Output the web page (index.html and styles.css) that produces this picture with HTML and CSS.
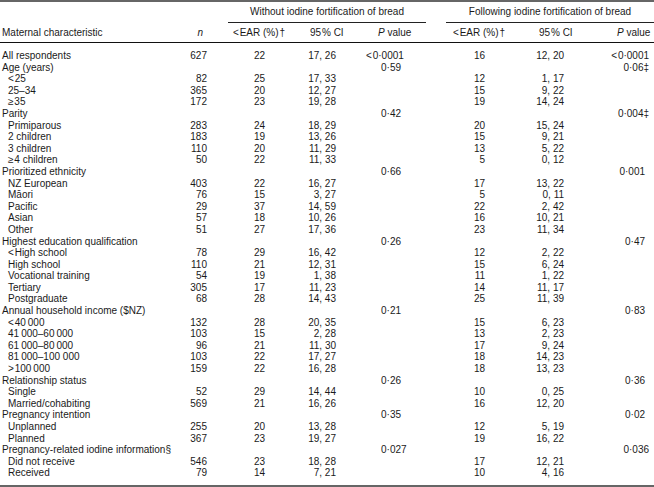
FILE: index.html
```html
<!DOCTYPE html>
<html lang="en">
<head>
    <meta charset="UTF-8">
    <meta name="viewport" content="width=device-width, initial-scale=1.0">
    <title>Iodine intake by maternal characteristic</title>
    <link rel="stylesheet" href="styles.css">
</head>
<body>
    <table class="iodine-table">
        <colgroup>
            <col class="c-label">
            <col class="c-n">
            <col class="c-ear1">
            <col class="c-ci1">
            <col class="c-p1">
            <col class="c-ear2">
            <col class="c-ci2">
            <col class="c-p2">
        </colgroup>
        <thead>
            <tr class="group-row">
                <th></th>
                <th></th>
                <th colspan="3" class="group group-1"><div>Without iodine fortification of bread</div></th>
                <th colspan="3" class="group group-2"><div>Following iodine fortification of bread</div></th>
            </tr>
            <tr class="col-row">
                <th class="label">Maternal characteristic</th>
                <th class="n"><i>n</i></th>
                <th class="ear1">&lt;&#8202;EAR (%)&#8202;†</th>
                <th class="ci1">95&#8202;% CI</th>
                <th class="p1"><i>P</i> value</th>
                <th class="ear2">&lt;&#8202;EAR (%)&#8202;†</th>
                <th class="ci2">95&#8202;% CI</th>
                <th class="p2"><i>P</i> value</th>
            </tr>
        </thead>
        <tbody>
            <!-- All respondents -->
            <tr class="first">
                <td class="label">All respondents</td>
                <td class="n">627</td><td class="ear1">22</td><td class="ci1">17, 26</td><td class="p1 lt">&lt;&#8202;0·0001</td>
                <td class="ear2">16</td><td class="ci2">12, 20</td><td class="p2 wide">&lt;&#8202;0·0001</td>
            </tr>

            <!-- Age -->
            <tr>
                <td class="label">Age (years)</td>
                <td class="n"></td><td class="ear1"></td><td class="ci1"></td><td class="p1">0·59</td>
                <td class="ear2"></td><td class="ci2"></td><td class="p2 wide">0·06‡</td>
            </tr>
            <tr>
                <td class="label sub">&lt;&#8202;25</td>
                <td class="n">82</td><td class="ear1">25</td><td class="ci1">17, 33</td><td class="p1"></td>
                <td class="ear2">12</td><td class="ci2">1, 17</td><td class="p2"></td>
            </tr>
            <tr>
                <td class="label sub">25–34</td>
                <td class="n">365</td><td class="ear1">20</td><td class="ci1">12, 27</td><td class="p1"></td>
                <td class="ear2">15</td><td class="ci2">9, 22</td><td class="p2"></td>
            </tr>
            <tr>
                <td class="label sub">≥&#8202;35</td>
                <td class="n">172</td><td class="ear1">23</td><td class="ci1">19, 28</td><td class="p1"></td>
                <td class="ear2">19</td><td class="ci2">14, 24</td><td class="p2"></td>
            </tr>

            <!-- Parity -->
            <tr>
                <td class="label">Parity</td>
                <td class="n"></td><td class="ear1"></td><td class="ci1"></td><td class="p1">0·42</td>
                <td class="ear2"></td><td class="ci2"></td><td class="p2 wide">0·004‡</td>
            </tr>
            <tr>
                <td class="label sub">Primiparous</td>
                <td class="n">283</td><td class="ear1">24</td><td class="ci1">18, 29</td><td class="p1"></td>
                <td class="ear2">20</td><td class="ci2">15, 24</td><td class="p2"></td>
            </tr>
            <tr>
                <td class="label sub">2 children</td>
                <td class="n">183</td><td class="ear1">19</td><td class="ci1">13, 26</td><td class="p1"></td>
                <td class="ear2">15</td><td class="ci2">9, 21</td><td class="p2"></td>
            </tr>
            <tr>
                <td class="label sub">3 children</td>
                <td class="n">110</td><td class="ear1">20</td><td class="ci1">11, 29</td><td class="p1"></td>
                <td class="ear2">13</td><td class="ci2">5, 22</td><td class="p2"></td>
            </tr>
            <tr>
                <td class="label sub">≥&#8202;4 children</td>
                <td class="n">50</td><td class="ear1">22</td><td class="ci1">11, 33</td><td class="p1"></td>
                <td class="ear2">5</td><td class="ci2">0, 12</td><td class="p2"></td>
            </tr>

            <!-- Ethnicity -->
            <tr>
                <td class="label">Prioritized ethnicity</td>
                <td class="n"></td><td class="ear1"></td><td class="ci1"></td><td class="p1">0·66</td>
                <td class="ear2"></td><td class="ci2"></td><td class="p2">0·001</td>
            </tr>
            <tr>
                <td class="label sub">NZ European</td>
                <td class="n">403</td><td class="ear1">22</td><td class="ci1">16, 27</td><td class="p1"></td>
                <td class="ear2">17</td><td class="ci2">13, 22</td><td class="p2"></td>
            </tr>
            <tr>
                <td class="label sub">Māori</td>
                <td class="n">76</td><td class="ear1">15</td><td class="ci1">3, 27</td><td class="p1"></td>
                <td class="ear2">5</td><td class="ci2">0, 11</td><td class="p2"></td>
            </tr>
            <tr>
                <td class="label sub">Pacific</td>
                <td class="n">29</td><td class="ear1">37</td><td class="ci1">14, 59</td><td class="p1"></td>
                <td class="ear2">22</td><td class="ci2">2, 42</td><td class="p2"></td>
            </tr>
            <tr>
                <td class="label sub">Asian</td>
                <td class="n">57</td><td class="ear1">18</td><td class="ci1">10, 26</td><td class="p1"></td>
                <td class="ear2">16</td><td class="ci2">10, 21</td><td class="p2"></td>
            </tr>
            <tr>
                <td class="label sub">Other</td>
                <td class="n">51</td><td class="ear1">27</td><td class="ci1">17, 36</td><td class="p1"></td>
                <td class="ear2">23</td><td class="ci2">11, 34</td><td class="p2"></td>
            </tr>

            <!-- Education -->
            <tr>
                <td class="label">Highest education qualification</td>
                <td class="n"></td><td class="ear1"></td><td class="ci1"></td><td class="p1">0·26</td>
                <td class="ear2"></td><td class="ci2"></td><td class="p2">0·47</td>
            </tr>
            <tr>
                <td class="label sub">&lt;&#8202;High school</td>
                <td class="n">78</td><td class="ear1">29</td><td class="ci1">16, 42</td><td class="p1"></td>
                <td class="ear2">12</td><td class="ci2">2, 22</td><td class="p2"></td>
            </tr>
            <tr>
                <td class="label sub">High school</td>
                <td class="n">110</td><td class="ear1">21</td><td class="ci1">12, 31</td><td class="p1"></td>
                <td class="ear2">15</td><td class="ci2">6, 24</td><td class="p2"></td>
            </tr>
            <tr>
                <td class="label sub">Vocational training</td>
                <td class="n">54</td><td class="ear1">19</td><td class="ci1">1, 38</td><td class="p1"></td>
                <td class="ear2">11</td><td class="ci2">1, 22</td><td class="p2"></td>
            </tr>
            <tr>
                <td class="label sub">Tertiary</td>
                <td class="n">305</td><td class="ear1">17</td><td class="ci1">11, 23</td><td class="p1"></td>
                <td class="ear2">14</td><td class="ci2">11, 17</td><td class="p2"></td>
            </tr>
            <tr>
                <td class="label sub">Postgraduate</td>
                <td class="n">68</td><td class="ear1">28</td><td class="ci1">14, 43</td><td class="p1"></td>
                <td class="ear2">25</td><td class="ci2">11, 39</td><td class="p2"></td>
            </tr>

            <!-- Income -->
            <tr>
                <td class="label">Annual household income ($NZ)</td>
                <td class="n"></td><td class="ear1"></td><td class="ci1"></td><td class="p1">0·21</td>
                <td class="ear2"></td><td class="ci2"></td><td class="p2">0·83</td>
            </tr>
            <tr>
                <td class="label sub">&lt;&#8202;40&#8201;000</td>
                <td class="n">132</td><td class="ear1">28</td><td class="ci1">20, 35</td><td class="p1"></td>
                <td class="ear2">15</td><td class="ci2">6, 23</td><td class="p2"></td>
            </tr>
            <tr>
                <td class="label sub">41&#8201;000–60&#8201;000</td>
                <td class="n">103</td><td class="ear1">15</td><td class="ci1">2, 28</td><td class="p1"></td>
                <td class="ear2">13</td><td class="ci2">2, 23</td><td class="p2"></td>
            </tr>
            <tr>
                <td class="label sub">61&#8201;000–80&#8201;000</td>
                <td class="n">96</td><td class="ear1">21</td><td class="ci1">11, 30</td><td class="p1"></td>
                <td class="ear2">17</td><td class="ci2">9, 24</td><td class="p2"></td>
            </tr>
            <tr>
                <td class="label sub">81&#8201;000–100 000</td>
                <td class="n">103</td><td class="ear1">22</td><td class="ci1">17, 27</td><td class="p1"></td>
                <td class="ear2">18</td><td class="ci2">14, 23</td><td class="p2"></td>
            </tr>
            <tr>
                <td class="label sub">&gt;&#8202;100&#8201;000</td>
                <td class="n">159</td><td class="ear1">22</td><td class="ci1">16, 28</td><td class="p1"></td>
                <td class="ear2">18</td><td class="ci2">13, 23</td><td class="p2"></td>
            </tr>

            <!-- Relationship -->
            <tr>
                <td class="label">Relationship status</td>
                <td class="n"></td><td class="ear1"></td><td class="ci1"></td><td class="p1">0·26</td>
                <td class="ear2"></td><td class="ci2"></td><td class="p2">0·36</td>
            </tr>
            <tr>
                <td class="label sub">Single</td>
                <td class="n">52</td><td class="ear1">29</td><td class="ci1">14, 44</td><td class="p1"></td>
                <td class="ear2">10</td><td class="ci2">0, 25</td><td class="p2"></td>
            </tr>
            <tr>
                <td class="label sub">Married/cohabiting</td>
                <td class="n">569</td><td class="ear1">21</td><td class="ci1">16, 26</td><td class="p1"></td>
                <td class="ear2">16</td><td class="ci2">12, 20</td><td class="p2"></td>
            </tr>

            <!-- Pregnancy intention -->
            <tr>
                <td class="label">Pregnancy intention</td>
                <td class="n"></td><td class="ear1"></td><td class="ci1"></td><td class="p1">0·35</td>
                <td class="ear2"></td><td class="ci2"></td><td class="p2">0·02</td>
            </tr>
            <tr>
                <td class="label sub">Unplanned</td>
                <td class="n">255</td><td class="ear1">20</td><td class="ci1">13, 28</td><td class="p1"></td>
                <td class="ear2">12</td><td class="ci2">5, 19</td><td class="p2"></td>
            </tr>
            <tr>
                <td class="label sub">Planned</td>
                <td class="n">367</td><td class="ear1">23</td><td class="ci1">19, 27</td><td class="p1"></td>
                <td class="ear2">19</td><td class="ci2">16, 22</td><td class="p2"></td>
            </tr>

            <!-- Iodine information -->
            <tr>
                <td class="label">Pregnancy-related iodine information§</td>
                <td class="n"></td><td class="ear1"></td><td class="ci1"></td><td class="p1">0·027</td>
                <td class="ear2"></td><td class="ci2"></td><td class="p2 wide">0·036</td>
            </tr>
            <tr>
                <td class="label sub">Did not receive</td>
                <td class="n">546</td><td class="ear1">23</td><td class="ci1">18, 28</td><td class="p1"></td>
                <td class="ear2">17</td><td class="ci2">12, 21</td><td class="p2"></td>
            </tr>
            <tr class="last">
                <td class="label sub">Received</td>
                <td class="n">79</td><td class="ear1">14</td><td class="ci1">7, 21</td><td class="p1"></td>
                <td class="ear2">10</td><td class="ci2">4, 16</td><td class="p2"></td>
            </tr>
        </tbody>
    </table>
</body>
</html>
```

FILE: styles.css
```css
body {
    margin: 0;
    padding: 0;
    background: #ffffff;
    font-family: "Liberation Sans", Arial, sans-serif;
    font-size: 10px;
    color: #1a1a1a;
}

.iodine-table {
    width: 654px;
    table-layout: fixed;
    border-collapse: collapse;
    border-top: 2px solid #666;
    border-bottom: 2px solid #666;
}

/* column widths */
.c-label { width: 180px; }
.c-n { width: 30px; }
.c-ear1 { width: 80px; }
.c-ci1 { width: 65px; }
.c-p1 { width: 75px; }
.c-ear2 { width: 85px; }
.c-ci2 { width: 75px; }
.c-p2 { width: 64px; }

.iodine-table th,
.iodine-table td {
    padding: 0;
    font-weight: normal;
    white-space: nowrap;
    line-height: 11.6px;
    text-align: left;
}

/* header */
.group-row th {
    padding-top: 4px;
    line-height: 12px;
}

.group div {
    text-align: center;
    padding-bottom: 4px;
    border-bottom: 1px solid #222;
}

.group-1 div {
    margin-left: 18px;
    margin-right: 4px;
}

.group-2 div {
    margin-left: 16px;
}

.col-row th {
    padding-top: 4px;
    padding-bottom: 3px;
    line-height: 12px;
    border-bottom: 1px solid #111;
}

.col-row th.label { padding-left: 2px; }
.col-row th.n { text-align: right; padding-right: 7px; }
.col-row th.ear1 { padding-left: 23px; }
.col-row th.ci1 { padding-left: 20px; }
.col-row th.p1 { padding-left: 23px; }
.col-row th.ear2 { padding-left: 23px; }
.col-row th.ci2 { padding-left: 24px; }
.col-row th.p2 { padding-left: 27px; }

/* body */
.first td { padding-top: 7px; }
.last td { padding-bottom: 6px; }

td.label { padding-left: 2px; }
td.label.sub { padding-left: 8px; }

td.n { text-align: right; padding-right: 3px; }
td.ear1 { text-align: right; padding-right: 25px; }
td.ci1 { text-align: right; padding-right: 19px; }
td.p1 { padding-left: 26px; }
td.p1.lt { padding-left: 11px; }
td.ear2 { text-align: right; padding-right: 30px; }
td.ci2 { text-align: right; padding-right: 26px; }
td.p2 { text-align: right; padding-right: 9px; }
td.p2.wide { padding-right: 5px; }
```
